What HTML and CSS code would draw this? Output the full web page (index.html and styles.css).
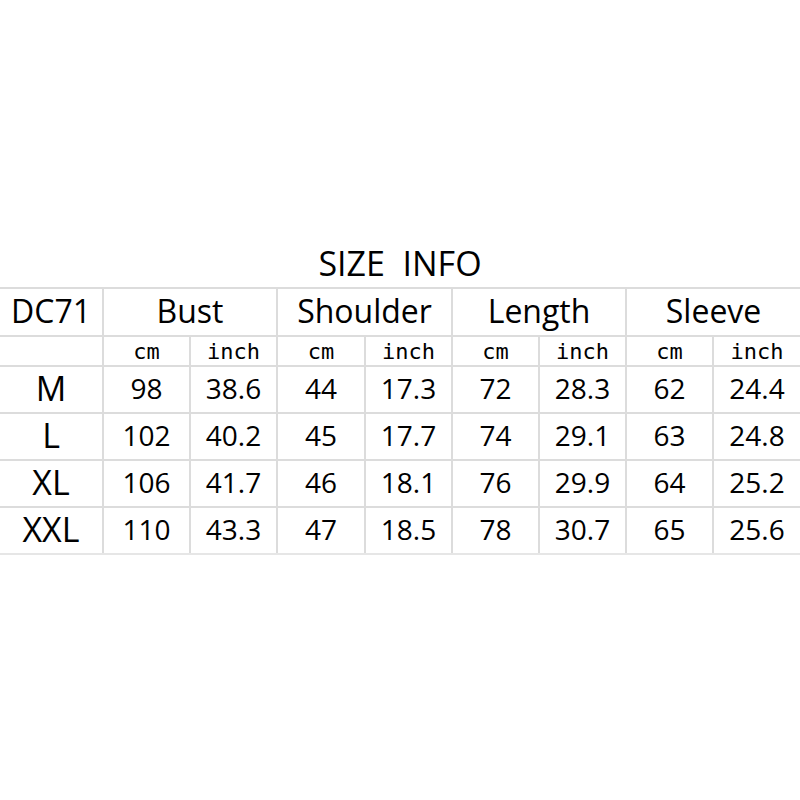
FILE: index.html
```html
<!DOCTYPE html>
<html>
<head>
<meta charset="utf-8">
<link rel="stylesheet" href="styles.css">
</head>
<body>
<div class="page">
  <div class="title">SIZE&nbsp; INFO</div>
  <table class="sizes">
    <colgroup>
      <col class="c0"><col class="c"><col class="c"><col class="c1"><col class="c"><col class="c"><col class="c"><col class="c"><col class="c">
    </colgroup>
    <tr class="head">
      <td>DC71</td>
      <td colspan="2">Bust</td>
      <td colspan="2">Shoulder</td>
      <td colspan="2">Length</td>
      <td colspan="2">Sleeve</td>
    </tr>
    <tr class="units">
      <td></td>
      <td>cm</td><td>inch</td>
      <td>cm</td><td>inch</td>
      <td>cm</td><td>inch</td>
      <td>cm</td><td>inch</td>
    </tr>
    <tr class="row"><td class="size">M</td><td>98</td><td>38.6</td><td>44</td><td>17.3</td><td>72</td><td>28.3</td><td>62</td><td>24.4</td></tr>
    <tr class="row"><td class="size">L</td><td>102</td><td>40.2</td><td>45</td><td>17.7</td><td>74</td><td>29.1</td><td>63</td><td>24.8</td></tr>
    <tr class="row"><td class="size">XL</td><td>106</td><td>41.7</td><td>46</td><td>18.1</td><td>76</td><td>29.9</td><td>64</td><td>25.2</td></tr>
    <tr class="row"><td class="size">XXL</td><td>110</td><td>43.3</td><td>47</td><td>18.5</td><td>78</td><td>30.7</td><td>65</td><td>25.6</td></tr>
  </table>
</div>
</body>
</html>
```
FILE: styles.css
```css
html, body {
  margin: 0;
  padding: 0;
  background: #ffffff;
}
.page {
  width: 800px;
  padding-top: 243px;
  font-family: "Open Sans", "Noto Sans", sans-serif;
  color: #000;
}
.title {
  height: 44px;
  line-height: 40px;
  font-size: 34px;
  text-align: center;
}
.sizes {
  width: 800px;
  border-collapse: collapse;
  table-layout: fixed;
}
.c0 { width: 103px; }
.c { width: 87px; }
.c1 { width: 88px; }
.sizes td {
  border: 2px solid #dcdcdc;
  text-align: center;
  padding: 0;
  white-space: nowrap;
}
.sizes td:first-child { border-left: none; }
.sizes td:last-child { border-right: none; }
.head td {
  height: 44px;
  font-size: 32px;
  line-height: 40px;
  padding-bottom: 2px;
}
.units td {
  height: 26px;
  font-family: "DejaVu Sans Mono", "Liberation Mono", monospace;
  font-size: 22px;
  line-height: 26px;
  padding-top: 2px;
}
.row td {
  height: 41px;
  font-size: 28px;
  line-height: 40px;
  padding-bottom: 4px;
}
.row td.size {
  font-size: 34px;
}
.row:last-child td {
  height: 41px;
  border-bottom: 2px solid #e6e6e6;
}
```
